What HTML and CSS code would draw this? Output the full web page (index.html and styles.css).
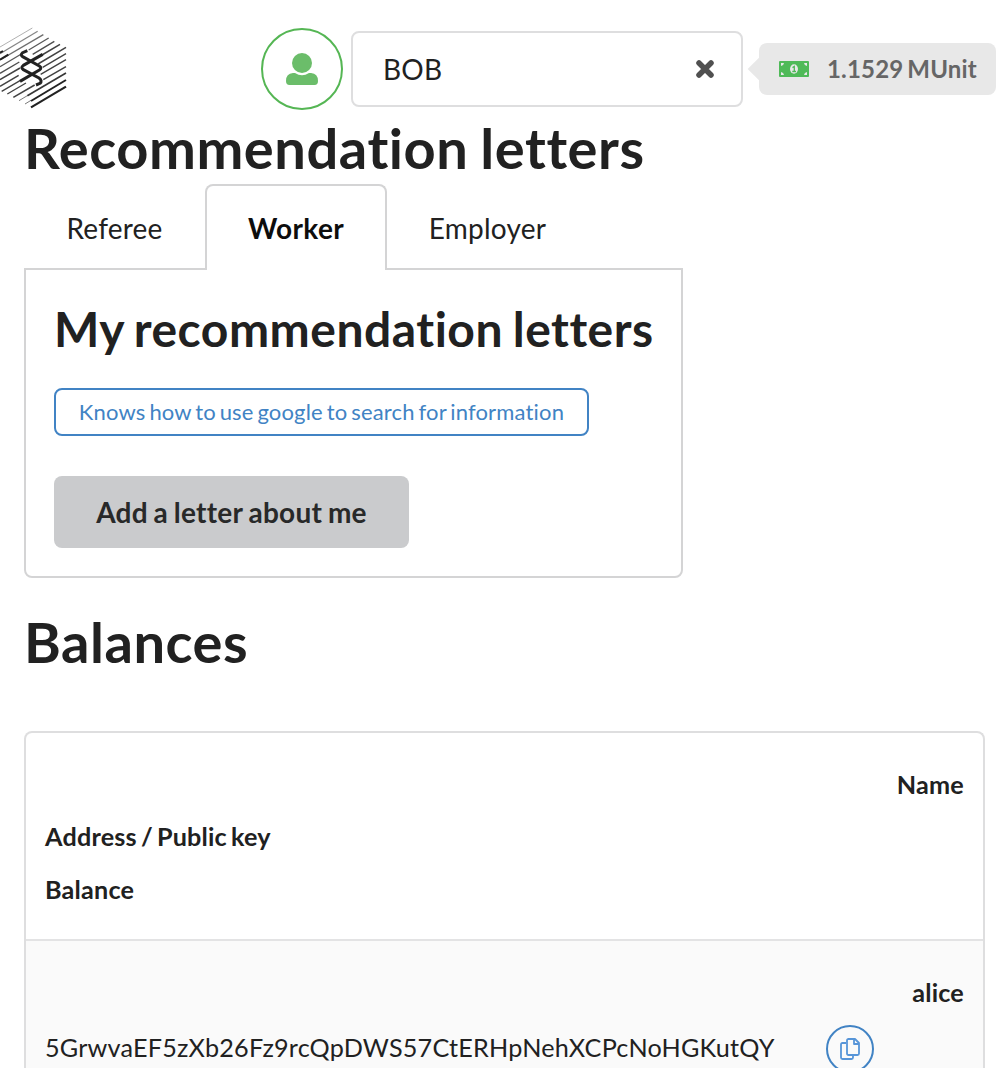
FILE: index.html
```html
<!DOCTYPE html>
<html lang="en">
<head>
<meta charset="utf-8">
<title>Recommendation letters</title>
<link rel="stylesheet" href="styles.css">
</head>
<body>
<header class="topbar">
  <svg class="logo" viewBox="0 0 198 252" aria-label="Logo">
    <g stroke="#222">
      <path stroke-width="3" opacity=".35" d="M0 51L97-6"/>
      <path stroke-width="3.5" opacity=".55" d="M0 71L113 4"/>
      <path stroke-width="4" opacity=".65" d="M0 90L130 14"/>
      <path stroke-width="4" opacity=".75" d="M0 110L64 72M86 60L146 24"/>
      <path stroke-width="4" opacity=".8" d="M0 130L58 96M98 73L163 34"/>
      <path stroke-width="4.500" opacity=".85" d="M0 149L60 114M126 75L180 43"/>
      <path stroke-width="4.500" opacity=".85" d="M0 169L56 136M114 102L198 52"/>
      <path stroke-width="4" opacity=".85" d="M5 184L60 152M128 112L198 71"/>
      <path stroke-width="4" opacity=".85" d="M22 192L78 159M122 133L198 89"/>
      <path stroke-width="4.500" opacity=".85" d="M40 202L104 165M130 149L198 110"/>
      <path stroke-width="5" opacity=".9" d="M82 197L198 129"/>
      <path stroke-width="3" opacity=".6" d="M57 212L82 197M75 222L93 211"/>
      <path stroke-width="6" d="M93 213L198 150"/>
      <path stroke-width="6.500" d="M93 232L198 170"/>
      <path stroke-width="6" d="M0 68L9 63M0 89L25 74"/>
    </g>
    <g class="logo-knot">
      <path d="M82 62L68 68Q60 75 68 80L118 108Q127 114 118 120L60 154"/>
      <path d="M128 73L70 106Q61 113 70 119L117 144Q128 152 120 160L108 165"/>
    </g>
  </svg>
  <div class="account">
    <button class="avatar" aria-label="Account">
      <svg viewBox="0 0 32 32"><circle cx="16" cy="10" r="10"/><path d="M7 20H9Q16 24.500 23 20H25Q32 20.500 32 28Q32 32 28.500 32H3.500Q0 32 0 28Q0 20.500 7 20Z"/></svg>
    </button>
    <div class="dropdown">
      <span>BOB</span>
      <svg class="clear" viewBox="0 0 20 20"><path d="M4 4L16 16M16 4L4 16"/></svg>
    </div>
    <div class="balance">
      <svg class="bill" viewBox="0 0 30 16">
        <rect width="30" height="16" rx="1" fill="#4fba58"/>
        <path d="M2 2H5Q4.700 4.700 2 5ZM28 2H25Q25.300 4.700 28 5ZM2 14H5Q4.700 11.300 2 11ZM28 14H25Q25.300 11.300 28 11Z" fill="#e8e8e8"/>
        <ellipse cx="15" cy="8" rx="4" ry="4.700" fill="#e8e8e8"/>
        <path d="M13.500 6.600L15.300 5.500V10.300M13.300 10.500H17" fill="none" stroke="#4fba58" stroke-width="1.300"/>
      </svg>
      <span>1.1529 MUnit</span>
    </div>
  </div>
</header>
<main class="content">
  <h1 class="title">Recommendation letters</h1>
  <section class="letters">
    <nav class="tabs">
      <a class="tab">Referee</a>
      <a class="tab active">Worker</a>
      <a class="tab">Employer</a>
    </nav>
    <div class="pane">
      <h2 class="subtitle">My recommendation letters</h2>
      <button class="letter">Knows how to use google to search for information</button>
      <button class="add">Add a letter about me</button>
    </div>
  </section>
  <h1 class="title balances-title">Balances</h1>
  <div class="table">
    <div class="row">
      <div class="name">Name</div>
      <div class="cell strong">Address / Public key</div>
      <div class="cell strong">Balance</div>
    </div>
    <div class="row striped">
      <div class="name">alice</div>
      <div class="cell address">
        <span class="key">5GrwvaEF5zXb26Fz9rcQpDWS57CtERHpNehXCPcNoHGKutQY</span>
        <button class="copy" aria-label="Copy">
          <svg viewBox="0 0 20 22"><path d="M6 5H2.500Q1 5 1 6.500V19.500Q1 21 2.500 21H11.500Q13 21 13 19.500V17"/><path d="M8 1H15L19 5V15.500Q19 17 17.500 17H8.500Q7 17 7 15.500V2.500Q7 1 8.500 1M14 1V6H19"/></svg>
        </button>
      </div>
    </div>
  </div>
</main>
</body>
</html>
```
FILE: styles.css
```css
* { box-sizing: border-box; letter-spacing: .008em; word-spacing: -.09em; }
body { margin: 0; height: 1068px; overflow: hidden; background: #fff; }
body, button { font-family: Lato, "Liberation Sans", sans-serif; color: #212121; font-variant-ligatures: none; }
body { display: flex; flex-direction: column; font-size: 28px; line-height: 40px; }
button { margin: 0; padding: 0; }
svg { display: block; }

.topbar { display: flex; flex: none; justify-content: space-between; height: 116px; padding-top: 28px; }
.logo { width: 66px; height: 84px; margin-top: 2px; overflow: visible; }
.logo-knot { fill: none; stroke: #222; stroke-width: 9; }
.account { display: flex; align-items: flex-start; }
.avatar { display: flex; align-items: center; justify-content: center; width: 82px; height: 82px; margin-right: 8px; border: 2px solid #55b654; border-radius: 50%; background: #fff; }
.avatar svg { width: 32px; height: 32px; fill: #6bbd6a; }
.dropdown { display: flex; align-items: center; justify-content: space-between; width: 392px; height: 76px; margin-top: 3px; padding: 0 26px 0 30px; border: 2px solid #dededf; border-radius: 8px; }
.clear { width: 20px; height: 20px; stroke: #505050; stroke-width: 5.500; stroke-linecap: round; }
.balance { position: relative; display: flex; align-items: center; width: 237px; height: 52px; margin: 15px 0 0 16px; padding-left: 20px; border-radius: 8px; background: #e8e8e8; color: #666; font-size: 24px; font-weight: 700; }
.balance::before { content: ""; position: absolute; left: -8px; top: 18px; width: 16px; height: 16px; background: #e8e8e8; transform: rotate(45deg); }
.bill { width: 30px; height: 16px; margin-right: 18px; }

.content { display: flex; flex: 1; flex-direction: column; min-height: 0; padding: 0 11px 0 24px; }
.title { margin: 0; font-size: 56px; line-height: 64px; font-weight: 700; letter-spacing: .01em; word-spacing: -.04em; white-space: nowrap; }
.letters { width: 659px; }
.tabs { display: flex; height: 86px; margin-top: 4px; }
.tab { display: flex; align-items: center; justify-content: center; width: 181px; padding-top: 2px; }
.tab:last-child { width: 202px; padding-right: 1px; }
.tab.active { position: relative; width: 182px; padding-top: 0; border: 2px solid #d4d4d5; border-bottom: 0; border-radius: 8px 8px 0 0; background: #fff; color: #0d0d0d; font-weight: 700; letter-spacing: .014em; }
.pane { margin-top: -2px; height: 310px; padding: 28px; border: 2px solid #d4d4d5; border-radius: 0 0 8px 8px; }
.subtitle { margin: 0 0 28px; font-size: 48px; line-height: 62px; font-weight: 700; letter-spacing: .0105em; word-spacing: -.05em; white-space: nowrap; }
.letter { display: block; width: 535px; height: 48px; padding-bottom: 2px; border: 2px solid #4183c4; border-radius: 8px; background: #fff; color: #4183c4; font-size: 22px; white-space: nowrap; }
.add { display: block; width: 355px; height: 72px; margin-top: 40px; border: 0; border-radius: 8px; background: #cacbcd; color: #282929; font-size: 28px; font-weight: 700; letter-spacing: .01em; word-spacing: -.05em; }
.balances-title { margin-top: 32px; }
.table { flex: 1; min-height: 0; margin-top: 57px; border: 2px solid #dededf; border-bottom: 0; border-radius: 8px 8px 0 0; font-size: 25.200px; overflow: hidden; }
.row { height: 208px; padding: 25px 19px 0; border-bottom: 2px solid #e3e3e4; }
.row.striped { height: 127px; border-bottom: 0; background: #fafafa; }
.name { height: 52px; line-height: 52px; text-align: right; font-weight: 700; }
.cell { height: 53px; line-height: 53px; }
.strong { font-weight: 700; }
.address { display: flex; align-items: flex-start; height: 50px; }
.key { width: 781px; padding-top: 3px; white-space: nowrap; }
.copy { display: flex; align-items: center; justify-content: center; width: 48px; height: 48px; margin-top: 7px; border: 2px solid #4183c4; border-radius: 50%; background: transparent; }
.copy svg { width: 20px; height: 22px; fill: none; stroke: #5795d8; stroke-width: 1.800; stroke-linejoin: round; }
```
